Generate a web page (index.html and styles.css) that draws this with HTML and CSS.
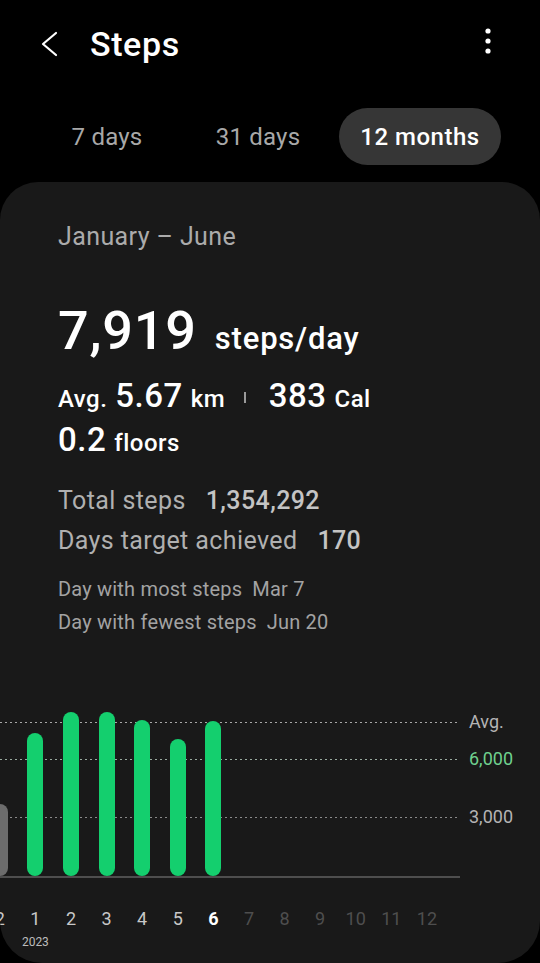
FILE: index.html
```html
<!DOCTYPE html>
<html lang="en">
<head>
    <meta charset="UTF-8">
    <meta name="viewport" content="width=device-width, initial-scale=1.0">
    <title>Steps</title>
    <link rel="stylesheet" href="styles.css">
</head>
<body>
    <header class="app-bar">
        <button class="icon-btn back-btn" aria-label="Back">
            <svg width="18" height="26" viewBox="0 0 18 26"><path d="M16 2 L3 13 L16 24" fill="none" stroke="#fff" stroke-width="2.2" stroke-linecap="round" stroke-linejoin="round"/></svg>
        </button>
        <h1 class="title">Steps</h1>
        <button class="icon-btn more-btn" aria-label="More options">
            <svg width="8" height="28" viewBox="0 0 8 28"><circle cx="4" cy="4" r="2.6" fill="#fff"/><circle cx="4" cy="14" r="2.6" fill="#fff"/><circle cx="4" cy="24" r="2.6" fill="#fff"/></svg>
        </button>
    </header>

    <nav class="tabs">
        <span class="tab tab-week">7 days</span>
        <span class="tab tab-month">31 days</span>
        <span class="tab tab-year active">12 months</span>
    </nav>

    <main class="card">
        <section class="summary">
            <p class="range">January – June</p>
            <p class="hero"><span class="hero-num">7,919</span><span class="hero-unit">steps/day</span></p>
            <p class="avg-row">
                <span class="unit">Avg.</span>
                <span class="num">5.67</span>
                <span class="unit">km</span>
                <span class="sep"></span>
                <span class="num">383</span>
                <span class="unit">Cal</span>
            </p>
            <p class="avg-row floors"><span class="num">0.2</span> <span class="unit">floors</span></p>

            <dl class="totals">
                <div class="stat"><dt>Total steps</dt><dd>1,354,292</dd></div>
                <div class="stat"><dt>Days target achieved</dt><dd>170</dd></div>
            </dl>
            <dl class="extremes">
                <div class="stat"><dt>Day with most steps</dt><dd>Mar 7</dd></div>
                <div class="stat"><dt>Day with fewest steps</dt><dd>Jun 20</dd></div>
            </dl>
        </section>

        <section class="chart">
            <div class="plot">
                <div class="gridline avg" style="bottom: 153px"><span class="y-label">Avg.</span></div>
                <div class="gridline goal" style="bottom: 116px"><span class="y-label">6,000</span></div>
                <div class="gridline" style="bottom: 58px"><span class="y-label">3,000</span></div>
                <div class="bars">
                    <div class="col"><div class="bar past" style="height: 72px"></div></div>
                    <div class="col"><div class="bar" style="height: 143px"></div></div>
                    <div class="col"><div class="bar" style="height: 164px"></div></div>
                    <div class="col"><div class="bar" style="height: 164px"></div></div>
                    <div class="col"><div class="bar" style="height: 156px"></div></div>
                    <div class="col"><div class="bar" style="height: 137px"></div></div>
                    <div class="col"><div class="bar" style="height: 155px"></div></div>
                    <div class="col"></div>
                    <div class="col"></div>
                    <div class="col"></div>
                    <div class="col"></div>
                    <div class="col"></div>
                    <div class="col"></div>
                </div>
            </div>
            <div class="months">
                <div class="month">2</div>
                <div class="month">1<span class="year">2023</span></div>
                <div class="month">2</div>
                <div class="month">3</div>
                <div class="month">4</div>
                <div class="month">5</div>
                <div class="month current">6</div>
                <div class="month future">7</div>
                <div class="month future">8</div>
                <div class="month future">9</div>
                <div class="month future">10</div>
                <div class="month future">11</div>
                <div class="month future">12</div>
            </div>
        </section>
    </main>
</body>
</html>
```

FILE: styles.css
```css
body {
    font-family: 'Roboto', 'Noto Sans', sans-serif;
    background-color: #000;
    color: #fff;
    margin: 0;
    padding: 0;
    height: 963px;
    overflow: hidden;
}

p, h1, dl, dd {
    margin: 0;
}

.app-bar {
    display: flex;
    align-items: center;
    height: 88px;
}

.icon-btn {
    background: none;
    border: none;
    padding: 0;
    display: flex;
    cursor: pointer;
}

.back-btn {
    margin-left: 40px;
}

.title {
    font-size: 34px;
    font-weight: 500;
    letter-spacing: 0.6px;
    margin-left: 32px;
    flex: 1;
}

.more-btn {
    margin-right: 48px;
    margin-top: -6px;
}

.tabs {
    display: flex;
    margin-top: 20px;
    height: 57px;
}

.tab {
    display: flex;
    align-items: center;
    justify-content: center;
    font-size: 24px;
    letter-spacing: 0.2px;
    color: #a8a8a8;
    border-radius: 29px;
}

.tab-week {
    width: 110px;
    margin-left: 52px;
}

.tab-month {
    width: 120px;
    margin-left: 36px;
}

.tab-year {
    width: 162px;
    margin-left: 21px;
}

.tab.active {
    background-color: #363636;
    color: #fff;
    font-weight: 500;
    letter-spacing: 0.5px;
}

.card {
    margin-top: 17px;
    height: 781px;
    background-color: #191919;
    border-radius: 38px 38px 42px 42px;
    overflow: hidden;
}

.summary {
    padding: 40px 0 0 58px;
}

.range {
    font-size: 25px;
    line-height: 30px;
    letter-spacing: 0.4px;
    color: #ababab;
}

.hero {
    margin-top: 48px;
    line-height: 62px;
    height: 62px;
    font-weight: 500;
}

.hero-num {
    font-size: 54px;
    letter-spacing: 0.8px;
}

.hero-unit {
    font-size: 31px;
    letter-spacing: 0.8px;
    margin-left: 18px;
}

.avg-row {
    display: flex;
    align-items: baseline;
    font-weight: 500;
    line-height: 40px;
    margin-top: 14px;
}

.avg-row .num {
    font-size: 33px;
    letter-spacing: 0.5px;
    margin: 0 8px;
}

.avg-row .unit {
    font-size: 24px;
    letter-spacing: 0.5px;
}

.avg-row .num:first-child {
    margin-left: 0;
}

.sep {
    width: 1.5px;
    height: 11px;
    background-color: #9a9a9a;
    margin: 0 15px 0 19px;
    align-self: center;
}

.floors {
    margin-top: 1px;
}

.totals {
    margin-top: 18px;
}

.stat {
    display: flex;
    align-items: baseline;
}

.totals .stat {
    font-size: 25px;
    line-height: 40px;
    letter-spacing: 0.4px;
    color: #b0b0b0;
}

.totals dd {
    margin-left: 20px;
    color: #c4c4c4;
    font-weight: 500;
}

.extremes {
    margin-top: 12px;
}

.extremes .stat {
    font-size: 20px;
    line-height: 33px;
    letter-spacing: 0.2px;
    color: #a3a3a3;
}

.extremes dd {
    margin-left: 10px;
}

.chart {
    margin-top: 61px;
}

.plot {
    position: relative;
    width: 460px;
    height: 176px;
    border-bottom: 2px solid #4e4e4e;
}

.gridline {
    position: absolute;
    left: 0;
    width: 100%;
    height: 1.5px;
    background-image: repeating-linear-gradient(to right, #8a8a8a 0 2px, transparent 2px 5px);
}

.gridline.avg {
    background-image: repeating-linear-gradient(to right, #a8a8a8 0 2px, transparent 2px 5px);
}

.gridline.goal {
    background-image: repeating-linear-gradient(to right, #9aaba0 0 2px, transparent 2px 5px);
}

.y-label {
    position: absolute;
    left: calc(100% + 9px);
    top: -11px;
    font-size: 18px;
    line-height: 22px;
    color: #b4b4b4;
}

.goal .y-label {
    color: #6fd08e;
}

.bars {
    position: relative;
    display: flex;
    height: 100%;
    margin-left: -18px;
}

.col,
.month {
    flex: 0 0 35.6px;
    display: flex;
    flex-direction: column;
    align-items: center;
}

.col {
    justify-content: flex-end;
}

.bar {
    width: 16px;
    border-radius: 8px;
    background-color: #14cf6e;
}

.bar.past {
    background-color: #6c6c6c;
}

.months {
    display: flex;
    margin-left: -18px;
    margin-top: 29px;
    font-size: 18px;
    line-height: 24px;
    color: #c8c8c8;
}

.month.current {
    color: #fff;
    font-weight: 700;
}

.month.future {
    color: #4e4e4e;
}

.year {
    font-size: 12px;
    line-height: 14px;
    margin-top: 4px;
    color: #bcbcbc;
}
```
